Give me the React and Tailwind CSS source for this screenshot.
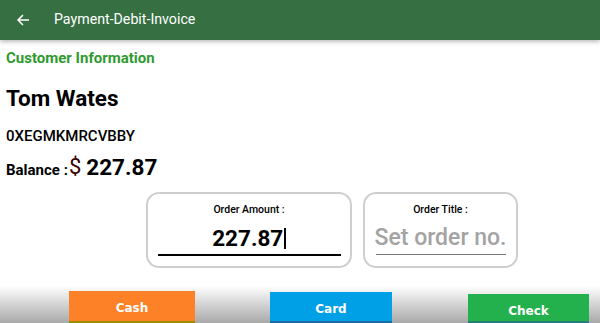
import React from "react";

const App = () => {
  return (
    <div className="relative w-[600px] h-[323px] overflow-hidden bg-white font-['Roboto',sans-serif] flex flex-col">
      <div className="h-[40px] shrink-0 bg-[#356f42] flex items-center shadow-[0_2px_4px_rgba(0,0,0,0.25)] relative z-10">
        <svg width="14" height="14" viewBox="0 0 24 24" className="ml-[16px]" fill="none" stroke="white" strokeWidth="2.6" strokeLinecap="square">
          <path d="M21 12H4M11 4.5L3.5 12L11 19.5" />
        </svg>
        <span className="ml-[24px] text-white text-[14.2px]">Payment-Debit-Invoice</span>
      </div>

      <div className="flex-1 pl-[6px]">
        <div className="mt-[8px] h-[20px] leading-[20px] text-[15px] font-bold text-[#2f9a2f]">Customer Information</div>
        <div className="mt-[17px] h-[26px] leading-[26px] text-[22.5px] font-bold text-black">Tom Wates</div>
        <div className="mt-[16px] h-[18px] leading-[18px] text-[15px] font-medium text-black">0XEGMKMRCVBBY</div>
        <div className="mt-[9px] h-[28px] flex items-center text-black">
          <span className="text-[15px] font-bold mt-[5px]">Balance :</span>
          <span className="ml-[1px] text-[22px] text-[#3a0000] -mt-[4px]">$</span>
          <span className="ml-[5px] text-[22.5px] font-bold">227.87</span>
        </div>

        <div className="mt-[10px] ml-[140px] flex gap-[11px]">
          <div className="w-[206px] h-[76px] border-2 border-[#cfcfcf] rounded-[13px] flex flex-col items-center">
            <div className="mt-[9px] text-[10.5px] font-medium text-black leading-[14px]">Order Amount :</div>
            <div className="mt-[7px] h-[28px] flex items-center">
              <span className="text-[22.5px] font-bold text-black leading-[28px]">227.87</span>
              <span className="w-[1.5px] h-[21px] bg-black ml-[1px]"></span>
            </div>
            <div className="mt-[2px] w-[183px] h-[1.5px] bg-black"></div>
          </div>
          <div className="w-[155px] h-[76px] border-2 border-[#cfcfcf] rounded-[13px] flex flex-col items-center">
            <div className="mt-[9px] text-[10.5px] font-medium text-black leading-[14px]">Order Title :</div>
            <div className="mt-[7px] h-[28px] flex items-center">
              <span className="text-[23px] font-medium text-[#a3a3a3] leading-[28px]">Set order no.</span>
            </div>
            <div className="mt-[2px] w-[130px] h-[1px] bg-[#777]"></div>
          </div>
        </div>
      </div>

      <div className="h-[37px] shrink-0 bg-gradient-to-b from-white to-[#a9a9a9] flex items-end font-['DejaVu_Sans',sans-serif] text-[12px] font-bold text-white">
        <div className="ml-[69px] w-[126px] h-[32px] bg-[#fc8127] border-b-[2px] border-[#9b8d00] flex items-center justify-center pt-[3px]">Cash</div>
        <div className="ml-[75px] w-[122px] h-[31px] bg-[#00a0e6] border-b-[2px] border-[#1f6aa0] flex items-center justify-center pt-[5px]">Card</div>
        <div className="ml-[76px] w-[121px] h-[29px] bg-[#22b14c] border-b-[2px] border-[#2a7f74] flex items-center justify-center pt-[6px]">Check</div>
      </div>
    </div>
  );
};

export default App;
